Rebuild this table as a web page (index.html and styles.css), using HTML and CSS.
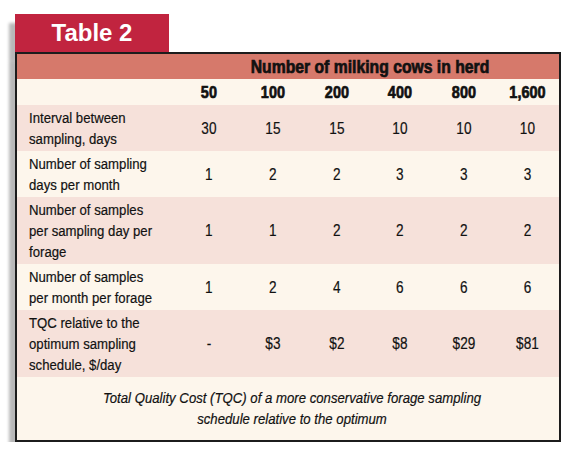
FILE: index.html
```html
<!DOCTYPE html>
<html lang="en">
<head>
  <meta charset="UTF-8" />
  <title>Table 2</title>
  <link rel="stylesheet" href="styles.css">
</head>
<body>

<!-- TABLE FIGURE -->
<div class="figure">
  <div class="tab">Table 2</div>

  <table class="data">
    <colgroup>
      <col class="col-label">
      <col><col><col><col><col><col>
    </colgroup>
    <thead>
      <tr class="head-top">
        <th></th>
        <th colspan="6"><span class="nw">Number of milking cows in herd</span></th>
      </tr>
      <tr class="head-sizes">
        <th></th>
        <th><span class="nw">50</span></th>
        <th><span class="nw">100</span></th>
        <th><span class="nw">200</span></th>
        <th><span class="nw">400</span></th>
        <th><span class="nw">800</span></th>
        <th><span class="nw">1,600</span></th>
      </tr>
    </thead>
    <tbody>
      <tr class="pink">
        <td><span class="lbl">Interval between sampling, days</span></td>
        <td><span class="nw">30</span></td>
        <td><span class="nw">15</span></td>
        <td><span class="nw">15</span></td>
        <td><span class="nw">10</span></td>
        <td><span class="nw">10</span></td>
        <td><span class="nw">10</span></td>
      </tr>
      <tr>
        <td><span class="lbl">Number of sampling days per month</span></td>
        <td><span class="nw">1</span></td>
        <td><span class="nw">2</span></td>
        <td><span class="nw">2</span></td>
        <td><span class="nw">3</span></td>
        <td><span class="nw">3</span></td>
        <td><span class="nw">3</span></td>
      </tr>
      <tr class="pink">
        <td><span class="lbl">Number of samples per sampling day per forage</span></td>
        <td><span class="nw">1</span></td>
        <td><span class="nw">1</span></td>
        <td><span class="nw">2</span></td>
        <td><span class="nw">2</span></td>
        <td><span class="nw">2</span></td>
        <td><span class="nw">2</span></td>
      </tr>
      <tr>
        <td><span class="lbl">Number of samples per month per forage</span></td>
        <td><span class="nw">1</span></td>
        <td><span class="nw">2</span></td>
        <td><span class="nw">4</span></td>
        <td><span class="nw">6</span></td>
        <td><span class="nw">6</span></td>
        <td><span class="nw">6</span></td>
      </tr>
      <tr class="pink">
        <td><span class="lbl">TQC relative to the optimum sampling schedule, $/day</span></td>
        <td><span class="nw">-</span></td>
        <td><span class="nw">$3</span></td>
        <td><span class="nw">$2</span></td>
        <td><span class="nw">$8</span></td>
        <td><span class="nw">$29</span></td>
        <td><span class="nw">$81</span></td>
      </tr>
      <tr class="note">
        <td colspan="7"><span class="nw">Total Quality Cost (TQC) of a more conservative forage sampling<br>schedule relative to the optimum</span></td>
      </tr>
    </tbody>
  </table>
</div>

</body>
</html>
```

FILE: styles.css
```css
* {
  box-sizing: border-box;
  margin: 0;
  padding: 0;
}

body {
  background-color: #ffffff;
  font-family: 'Liberation Sans', Arial, sans-serif;
  color: #111111;
}

/* FIGURE */
.figure {
  padding: 14px 0 0 15px;
  width: 561px;
}

.tab {
  width: 154px;
  height: 38px;
  background-color: #c1243f;
  color: #ffffff;
  font-weight: bold;
  font-size: 24px;
  line-height: 38px;
  text-align: center;
  box-shadow: -6px 9px 3px rgba(0, 0, 0, 0.28);
}

/* TABLE */
.data {
  width: 546px;
  border: 2px solid #1c1c1c;
  border-collapse: collapse;
  table-layout: fixed;
  background-color: #fdf6ec;
  font-size: 15.5px;
  line-height: 21px;
  -webkit-text-stroke: 0.2px #111111;
  box-shadow: -6px 9px 3px rgba(0, 0, 0, 0.28);
}

.col-label {
  width: 161px;
}

th, td {
  text-align: center;
  vertical-align: middle;
  padding: 2px 0;
}

/* condensed type: Arial narrowed the way Arial Narrow is */
.nw,
.lbl {
  display: block;
  white-space: nowrap;
  transform: scaleX(0.85);
}

.lbl {
  width: 154px;
  white-space: normal;
  text-align: left;
  transform-origin: 0 50%;
}

td .nw {
  font-size: 16px;
}

th {
  font-weight: bold;
  font-size: 17px;
  -webkit-text-stroke: 0.7px #111111;
}

.head-top {
  background-color: #d6796b;
  height: 26px;
}

.head-top th {
  padding-left: 4px;
  font-size: 18.5px;
}

.head-sizes {
  height: 26px;
}

.head-sizes th {
  padding-top: 3px;
}

td:first-child {
  text-align: left;
  padding-left: 12px;
}

.pink {
  background-color: #f6e1da;
}

.note td:first-child {
  text-align: center;
  font-style: italic;
  padding: 10px 0 11px 8px;
}

.note .nw {
  font-size: 15.5px;
}
```
